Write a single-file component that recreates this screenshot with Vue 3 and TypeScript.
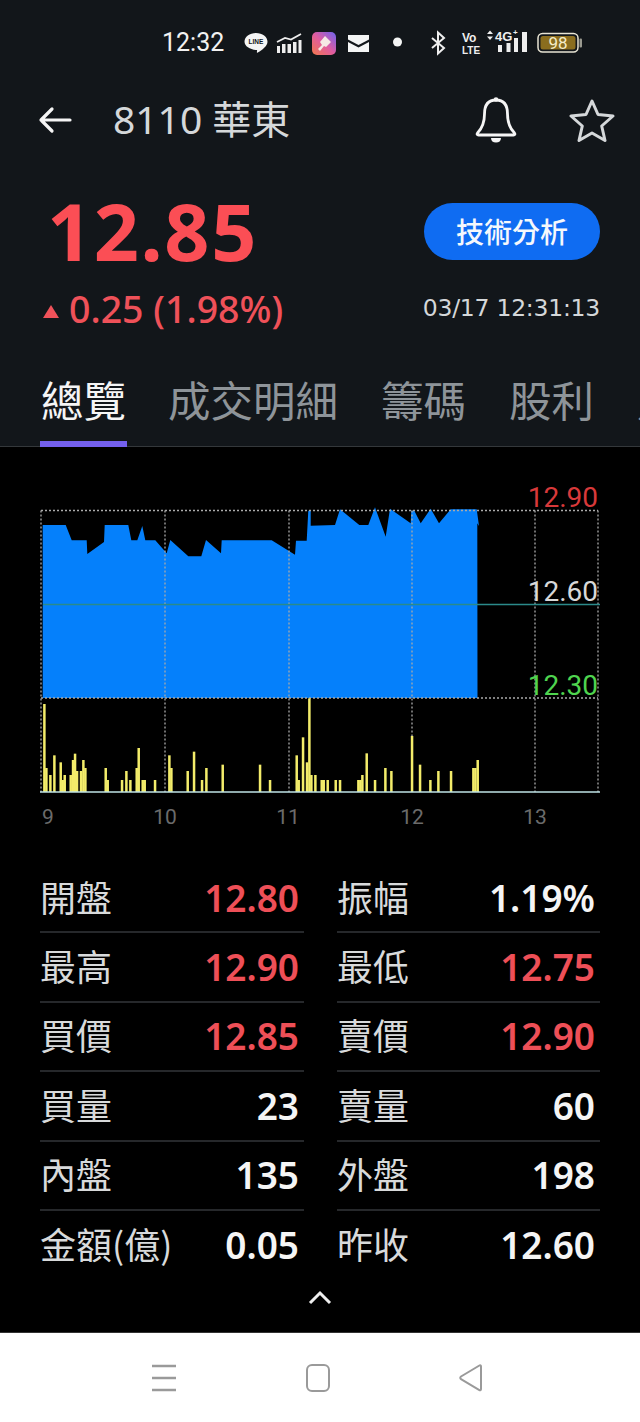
<template>
  <div class="screen">
    <header class="top">
      <div class="status">
        <span class="clock">12:32</span>
        <svg class="st-left" width="172" height="32" viewBox="0 0 172 32">
          <!-- LINE -->
          <path d="M14 7c6.400 0 11.500 3.700 11.500 8.800 0 4-4.800 8-9.700 10.700-.8.400-1 .2-.9-.5l.2-1.900C8.500 23.800 2.500 20.500 2.500 15.800 2.500 10.700 7.600 7 14 7z" fill="#f4f5f5" />
          <text x="14" y="18" class="line-txt" text-anchor="middle">LINE</text>
          <!-- signal chart -->
          <path d="M35 16l8-4 6 1.500 10-5.500" fill="none" stroke="#eee" stroke-width="1.800" />
          <path d="M35 20h3v7h-3zM40 18h3.500v9H40zM45.500 18H49v9h-3.500zM51 16h3.500v11H51zM56.500 14H59.500v13h-3z" fill="#eee" />
          <!-- app -->
          <defs>
            <linearGradient id="appg" x1="0" y1="1" x2="1" y2="0">
              <stop offset="0" stop-color="#f2784b" />
              <stop offset="0.500" stop-color="#e05ca0" />
              <stop offset="1" stop-color="#6c63f0" />
            </linearGradient>
          </defs>
          <rect x="70" y="6" width="24" height="23" rx="5" fill="url(#appg)" />
          <path d="M83 10l6 6-5 5-2-1-4 5-2-2 4-4-2-3z" fill="#f6e9e4" />
          <!-- mail -->
          <path d="M106 9h21v4.500L116.500 19 106 13.500z" fill="#f4f5f5" />
          <path d="M106 16l10.500 5.500L127 16v10h-21z" fill="#f4f5f5" />
          <circle cx="155.500" cy="16" r="4.500" fill="#f4f5f5" />
        </svg>
        <svg class="st-right" width="160" height="32" viewBox="0 0 160 32">
          <!-- bluetooth -->
          <path d="M10 12l12 10-6 5.500V6.500L22 12 10 22" fill="none" stroke="#eee" stroke-width="2" />
          <!-- volte -->
          <text x="40" y="16" class="volte">Vo</text>
          <text x="40" y="27.500" class="volte sm">LTE</text>
          <!-- network -->
          <path d="M65 8l3-3.500L71 8zM65 10.500l3 3.500 3-3.500z" fill="#eee" />
          <text x="73" y="15" class="net">4G</text>
          <text x="91" y="9" class="plus">+</text>
          <rect x="76" y="19" width="4" height="7" fill="#eee" />
          <rect x="84.500" y="17" width="4" height="9" fill="#eee" />
          <rect x="92" y="12" width="4" height="14" fill="#eee" />
          <rect x="100" y="6" width="5" height="20" fill="#eee" />
          <!-- battery -->
          <rect x="116" y="7.500" width="40" height="18.500" rx="4.500" fill="none" stroke="#e8e4d4" stroke-width="1.500" />
          <rect x="118.500" y="10" width="35" height="13.500" rx="2.500" fill="#8a6d1e" />
          <rect x="157.500" y="12.500" width="2.500" height="9" rx="1" fill="#9a9a90" />
          <text x="136" y="22.500" class="batt" text-anchor="middle">98</text>
        </svg>
      </div>

      <div class="title-row">
        <svg class="back" width="36" height="30" viewBox="0 0 36 30">
          <path d="M33 15H4M15 4L4 15l11 11" fill="none" stroke="#f5f5f5" stroke-width="3.200" stroke-linecap="round" stroke-linejoin="round" />
        </svg>
        <span class="title">8110 華東</span>
        <svg class="bell" width="44" height="50" viewBox="0 0 44 50">
          <path d="M22 5c-9 0-11.500 7-11.500 14 0 9-2 14-7 19-.8 1-.3 2 1 2h35c1.300 0 1.800-1 1-2-5-5-7-10-7-19 0-7-2.500-14-11.500-14z" fill="none" stroke="#f5f5f5" stroke-width="2.800" stroke-linejoin="round" />
          <circle cx="22" cy="4.500" r="2.300" fill="#f5f5f5" />
          <path d="M17 43h10c0 3-2 4.500-5 4.500S17 46 17 43z" fill="#f5f5f5" />
        </svg>
        <svg class="star" width="46" height="44" viewBox="0 0 46 44">
          <path d="M23 3l6 13.500 15 1.500-11.300 10 3.300 14.500L23 35l-13 7.500L13.300 28 2 18l15-1.500z" fill="none" stroke="#d5d8da" stroke-width="3" stroke-linejoin="round" />
        </svg>
      </div>

      <div class="quote">
        <div class="quote-left">
          <div class="price">12.85</div>
          <div class="change"><i class="up"></i>0.25 (1.98%)</div>
        </div>
        <div class="quote-right">
          <button class="ta-btn">技術分析</button>
          <div class="stamp">03/17 12:31:13</div>
        </div>
      </div>

      <nav class="tabs">
        <span v-for="(t, i) in tabs" :key="t" class="tab" :class="{ on: i === 0 }">{{ t }}</span>
      </nav>
    </header>

    <main class="body">
      <svg class="chart" width="640" height="350" viewBox="0 480 640 350">
        <path :d="areaPath" fill="#0580fb" />
        <g class="grid">
          <line v-for="x in gridX" :key="x" :x1="x" :x2="x" y1="510.500" y2="792" />
          <line x1="41" x2="598" y1="510.500" y2="510.500" />
          <line x1="41" x2="598" y1="698" y2="698" />
        </g>
        <line x1="43" x2="600" y1="604.500" y2="604.500" stroke="#2b8a8a" stroke-width="1.500" />
        <rect v-for="b in bars" :key="b.x" :x="b.x" :y="b.y" width="2.500" :height="792 - b.y" fill="#f3ec6a" />
        <line x1="40" x2="600" y1="792" y2="792" stroke="#bfe3e6" stroke-width="1.500" />
        <text x="598" y="507" class="ax" text-anchor="end" fill="#d8393a">12.90</text>
        <text x="598" y="601" class="ax" text-anchor="end" fill="#d8d8d8">12.60</text>
        <text x="598" y="695" class="ax" text-anchor="end" fill="#4fd44f">12.30</text>
        <text v-for="h in hours" :key="h.t" :x="h.x" y="824" class="hr" text-anchor="middle">{{ h.t }}</text>
      </svg>

      <section class="stats">
        <div v-for="s in stats" :key="s.k" class="cell">
          <span class="k">{{ s.k }}</span>
          <span class="v" :class="{ red: s.red }">{{ s.v }}</span>
        </div>
      </section>

      <div class="more">
        <svg width="26" height="16" viewBox="0 0 26 16">
          <path d="M3 14L13 4l10 10" fill="none" stroke="#eee" stroke-width="3" />
        </svg>
      </div>
    </main>

    <footer class="navbar">
      <svg width="28" height="30" viewBox="0 0 28 30">
        <path d="M2 3h24M2 15h24M2 27h24" stroke="#9a9a9a" stroke-width="2.400" />
      </svg>
      <svg width="28" height="30" viewBox="0 0 28 30">
        <rect x="3" y="2" width="22" height="26" rx="5" fill="none" stroke="#9a9a9a" stroke-width="2" />
      </svg>
      <svg width="28" height="30" viewBox="0 0 28 30">
        <path d="M24 3.500c0-1-.8-1.500-1.600-1L4 13.500c-1 .7-1 2 0 2.600l18.400 11c.8.500 1.600 0 1.600-1z" fill="none" stroke="#9a9a9a" stroke-width="2" />
      </svg>
    </footer>
  </div>
</template>

<script setup lang="ts">
interface Stat {
  k: string
  v: string
  red?: boolean
}

const tabs = ['總覽', '成交明細', '籌碼', '股利', '財務']

const stats: Stat[] = [
  { k: '開盤', v: '12.80', red: true },
  { k: '振幅', v: '1.19%' },
  { k: '最高', v: '12.90', red: true },
  { k: '最低', v: '12.75', red: true },
  { k: '買價', v: '12.85', red: true },
  { k: '賣價', v: '12.90', red: true },
  { k: '買量', v: '23' },
  { k: '賣量', v: '60' },
  { k: '內盤', v: '135' },
  { k: '外盤', v: '198' },
  { k: '金額(億)', v: '0.05' },
  { k: '昨收', v: '12.60' },
]

const gridX = [41, 165, 289, 412, 535, 598]
const hours = [
  { t: '9', x: 48 },
  { t: '10', x: 165 },
  { t: '11', x: 288 },
  { t: '12', x: 412 },
  { t: '13', x: 535 },
]

// points read off the chart at 3x: [x, y] in crop coords
const leftCrop = [
  [128, 135], [197, 135], [215, 181], [260, 181], [262, 222], [312, 186], [314, 135], [385, 135],
  [394, 181], [412, 181], [427, 138], [436, 181], [466, 181], [500, 220], [511, 180], [565, 229],
  [604, 229], [618, 180], [663, 220], [665, 181], [815, 181], [885, 224], [888, 182], [920, 182],
  [925, 92], [932, 92], [932, 137],
]
const rightCrop = [
  [45, 135], [60, 88], [118, 135], [145, 135], [165, 82], [197, 170], [210, 86], [272, 130],
  [274, 92], [283, 92], [302, 130], [332, 86], [357, 130], [392, 88], [470, 88], [477, 138], [472, 130],
]

const outline = [
  ...leftCrop.map(([x, y]) => [x / 3, y / 3 + 480]),
  ...rightCrop.map(([x, y]) => [x / 3 + 320, y / 3 + 480]),
]
const areaPath =
  'M' + outline.map(([x, y]) => `${x.toFixed(1)} ${y.toFixed(1)}`).join('L') + 'L477.500 698L42.700 698Z'

const leftBars = [
  [133, 672], [139, 864], [151, 885], [163, 826], [182, 847], [188, 900], [194, 885], [212, 885], [219, 840],
  [225, 821], [231, 873], [243, 873], [250, 840], [256, 864], [317, 864], [323, 900], [366, 900], [379, 873],
  [391, 900], [410, 864], [416, 804], [428, 900], [434, 900], [465, 900], [508, 826], [514, 864], [563, 873],
  [582, 815], [606, 900], [619, 864], [668, 854], [780, 854], [810, 900], [890, 826], [896, 900], [909, 772],
  [921, 847], [928, 655], [934, 885], [946, 885],
]
const rightBars = [
  [5, 900], [11, 900], [23, 900], [47, 900], [60, 900], [115, 900], [121, 900], [127, 885], [140, 820],
  [165, 900], [196, 864], [214, 873], [276, 768], [300, 854], [331, 900], [355, 873], [393, 873], [460, 864],
  [466, 864], [473, 840],
]
const bars = [
  ...leftBars.map(([x, y]) => ({ x: x / 3 - 1.2, y: y / 3 + 480 })),
  ...rightBars.map(([x, y]) => ({ x: x / 3 + 320 - 1.2, y: y / 3 + 480 })),
]
</script>

<style>
html,
body {
  margin: 0;
  background: #000;
}
</style>

<style scoped>
.screen {
  width: 640px;
  height: 1422px;
  display: flex;
  flex-direction: column;
  overflow: hidden;
  background: #000;
  font-family: 'Noto Sans', 'Noto Sans CJK TC', sans-serif;
}
.top {
  height: 447px;
  flex: none;
  box-sizing: border-box;
  background: #12161a;
  border-bottom: 1px solid #34383b;
}
.status {
  height: 84px;
  box-sizing: border-box;
  padding: 26px 0 0 162px;
  display: flex;
  align-items: flex-start;
  color: #f2f2f2;
}
.clock {
  font: 400 25px/34px Roboto, sans-serif;
  width: 80px;
  flex: none;
}
.st-left {
  flex: none;
}
.st-right {
  flex: none;
  margin-left: 8px;
}
.line-txt {
  font: 700 6.500px 'Liberation Sans', sans-serif;
  fill: #12161a;
}
.volte {
  font: 700 12px 'Liberation Sans', sans-serif;
  fill: #eee;
}
.volte.sm {
  font-size: 10px;
}
.net {
  font: 700 13px 'Liberation Sans', sans-serif;
  fill: #eee;
}
.plus {
  font: 700 8px 'Liberation Sans', sans-serif;
  fill: #eee;
}
.batt {
  font: 400 17px Roboto, sans-serif;
  fill: #f5ecc8;
}
.title-row {
  height: 72px;
  display: flex;
  align-items: center;
  padding-left: 37px;
  padding-right: 25px;
}
.back {
  flex: none;
}
.title {
  margin-left: 40px;
  margin-bottom: 3px;
  flex: 1;
  font-size: 39px;
  line-height: 44px;
  color: #d5d8da;
}
.bell {
  flex: none;
  margin-right: 51px;
}
.quote {
  height: 219px;
  box-sizing: border-box;
  display: flex;
  justify-content: space-between;
  padding: 47px 40px 0 40px;
}
.quote-left {
  margin-top: -12px;
}
.price {
  margin-left: 7px;
  font-size: 79px;
  font-weight: 700;
  letter-spacing: 1.600px;
  line-height: 80px;
  color: #fb4e55;
}
.change {
  display: flex;
  align-items: center;
  margin-top: 16px;
  font-size: 37.500px;
  font-weight: 500;
  line-height: 44px;
  color: #ef5159;
}
.up {
  width: 0;
  height: 0;
  margin: 4px 10px 0 3px;
  border-left: 8px solid transparent;
  border-right: 8px solid transparent;
  border-bottom: 13px solid #f0525a;
}
.quote-right {
  display: flex;
  flex-direction: column;
  align-items: flex-end;
}
.ta-btn {
  width: 176px;
  height: 57px;
  padding: 0;
  border: 0;
  border-radius: 29px;
  background: #0f6cf2;
  color: #f5f8fc;
  font: 500 28px/57px 'Noto Sans CJK TC', sans-serif;
}
.stamp {
  margin-top: 33px;
  font: 400 23.500px/30px 'DejaVu Sans', sans-serif;
  color: #d4d7d9;
  letter-spacing: -0.250px;
}
.tabs {
  display: flex;
  gap: 43px;
  padding-left: 40px;
  white-space: nowrap;
  height: 71px;
}
.tab {
  font: 400 42.500px/48px 'Noto Sans CJK TC', sans-serif;
  color: #8e9499;
  height: 72px;
  box-sizing: border-box;
  flex: none;
}
.tab.on {
  color: #f5f5f5;
  border-bottom: 6px solid #7460ee;
  width: 87px;
  margin-right: -2px;
  text-indent: 1px;
  white-space: nowrap;
}
.body {
  flex: 1;
  padding-top: 33px;
  background: #000;
}
.chart {
  display: block;
}
.grid line {
  stroke: #aaa;
  stroke-width: 1.300;
  stroke-dasharray: 2 2;
}
.ax {
  font: 400 28px Roboto, sans-serif;
}
.hr {
  font: 400 21px Roboto, sans-serif;
  fill: #6b6b6b;
}
.stats {
  display: grid;
  grid-template-columns: 264px 263px;
  column-gap: 33px;
  margin: 34px 0 0 40px;
}
.cell {
  height: 69.400px;
  box-sizing: border-box;
  display: flex;
  align-items: center;
  justify-content: space-between;
  padding-right: 5px;
  border-bottom: 2px solid #26282b;
}
.cell:nth-last-child(-n + 2) {
  border-bottom-color: transparent;
}
.k {
  margin-bottom: 4px;
  font: 400 36px/44px 'Noto Sans CJK TC', sans-serif;
  color: #d8dadb;
  white-space: nowrap;
}
.v {
  font-size: 37px;
  font-weight: 600;
  line-height: 44px;
  color: #f5f5f5;
}
.v.red {
  color: #ee4f57;
}
.more {
  display: flex;
  justify-content: center;
  margin-top: 9px;
}
.navbar {
  height: 89px;
  flex: none;
  background: #fff;
  border-top: 1px solid #333;
  display: flex;
  align-items: center;
  padding: 0 155px 0 150px;
  justify-content: space-between;
}
</style>
